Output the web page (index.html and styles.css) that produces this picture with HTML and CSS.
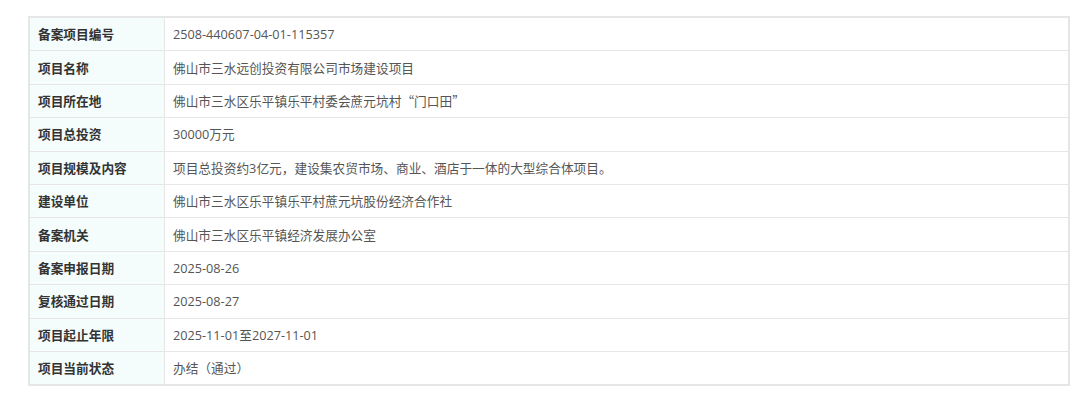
FILE: index.html
```html
<!DOCTYPE html>
<html lang="zh-CN">
<head>
  <meta charset="UTF-8">
  <title>备案项目信息</title>
  <link rel="stylesheet" href="styles.css">
</head>
<body>

  <div class="wrap">
    <table class="info">
      <tr><th>备案项目编号</th><td>2508-440607-04-01-115357</td></tr>
      <tr><th>项目名称</th><td>佛山市三水远创投资有限公司市场建设项目</td></tr>
      <tr><th>项目所在地</th><td>佛山市三水区乐平镇乐平村委会蔗元坑村<span class="cjk">“</span>门口田<span class="cjk">”</span></td></tr>
      <tr><th>项目总投资</th><td>30000万元</td></tr>
      <tr><th>项目规模及内容</th><td>项目总投资约3亿元，建设集农贸市场、商业、酒店于一体的大型综合体项目。</td></tr>
      <tr><th>建设单位</th><td>佛山市三水区乐平镇乐平村蔗元坑股份经济合作社</td></tr>
      <tr><th>备案机关</th><td>佛山市三水区乐平镇经济发展办公室</td></tr>
      <tr><th>备案申报日期</th><td>2025-08-26</td></tr>
      <tr><th>复核通过日期</th><td>2025-08-27</td></tr>
      <tr><th>项目起止年限</th><td>2025-11-01至2027-11-01</td></tr>
      <tr><th>项目当前状态</th><td>办结（通过）</td></tr>
    </table>
  </div>

</body>
</html>
```

FILE: styles.css
```css
body {
  margin: 0;
  padding: 0;
  background-color: #ffffff;
  font-family: "Open Sans", "Noto Sans CJK SC", sans-serif;
  font-size: 12.7px;
}

.wrap {
  padding: 16px 10px 0 28px;
}

.info {
  width: 1042px;
  border-collapse: collapse;
  border: 2px solid #e6e6e6;
}

.info th,
.info td {
  height: 32.4px;
  padding: 0 8px;
  border: 1px solid #e6e6e6;
  text-align: left;
  line-height: 20px;
}

.info th {
  width: 118px;
  background-color: #f4fcfc;
  color: #333333;
  font-weight: bold;
}

.info td {
  color: #555555;
  font-weight: normal;
}

.cjk {
  font-family: "Noto Sans CJK SC", sans-serif;
}
```
